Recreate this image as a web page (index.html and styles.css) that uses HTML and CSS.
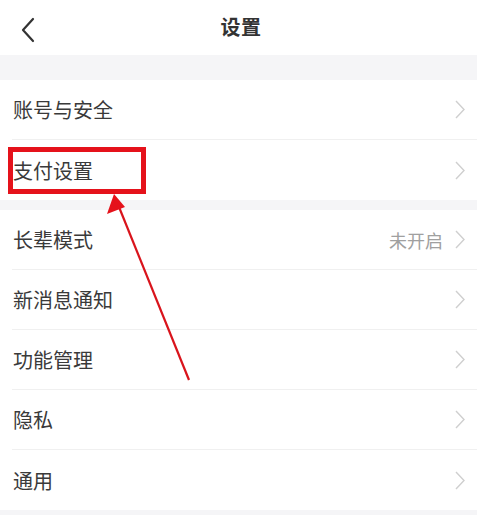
FILE: index.html
```html
<!DOCTYPE html>
<html lang="zh-CN">
<head>
<meta charset="utf-8">
<title>设置</title>
<link rel="stylesheet" href="styles.css">
</head>
<body>
<div class="page">
  <header class="topbar">
    <svg class="back" width="20" height="28" viewBox="0 0 20 28"><path d="M13 3 L3 14 L13 25" fill="none" stroke="#333" stroke-width="2.2" stroke-linecap="round" stroke-linejoin="round"/></svg>
    <h1 class="title">设置</h1>
  </header>
  <div class="gap gap-top"></div>
  <section class="group">
    <div class="row"><span class="label">账号与安全</span><svg class="chev" width="10" height="19" viewBox="0 0 10 19"><path d="M1 1 L9 9.5 L1 18" fill="none" stroke="#cfcfcf" stroke-width="1.4"/></svg></div>
    <div class="row"><span class="label">支付设置</span><svg class="chev" width="10" height="19" viewBox="0 0 10 19"><path d="M1 1 L9 9.5 L1 18" fill="none" stroke="#cfcfcf" stroke-width="1.4"/></svg></div>
  </section>
  <div class="gap gap-mid"></div>
  <section class="group">
    <div class="row"><span class="label">长辈模式</span><span class="value">未开启</span><svg class="chev" width="10" height="19" viewBox="0 0 10 19"><path d="M1 1 L9 9.5 L1 18" fill="none" stroke="#cfcfcf" stroke-width="1.4"/></svg></div>
    <div class="row"><span class="label">新消息通知</span><svg class="chev" width="10" height="19" viewBox="0 0 10 19"><path d="M1 1 L9 9.5 L1 18" fill="none" stroke="#cfcfcf" stroke-width="1.4"/></svg></div>
    <div class="row"><span class="label">功能管理</span><svg class="chev" width="10" height="19" viewBox="0 0 10 19"><path d="M1 1 L9 9.5 L1 18" fill="none" stroke="#cfcfcf" stroke-width="1.4"/></svg></div>
    <div class="row"><span class="label">隐私</span><svg class="chev" width="10" height="19" viewBox="0 0 10 19"><path d="M1 1 L9 9.5 L1 18" fill="none" stroke="#cfcfcf" stroke-width="1.4"/></svg></div>
    <div class="row"><span class="label">通用</span><svg class="chev" width="10" height="19" viewBox="0 0 10 19"><path d="M1 1 L9 9.5 L1 18" fill="none" stroke="#cfcfcf" stroke-width="1.4"/></svg></div>
  </section>
  <div class="gap gap-bottom"></div>

  <div class="highlight"></div>
  <svg class="arrow" width="477" height="515" viewBox="0 0 477 515">
    <line x1="189" y1="380" x2="119" y2="207" stroke="#d9141c" stroke-width="2.2"/>
    <polygon points="114,194 107,214 125,207" fill="#e5121b"/>
  </svg>
</div>
</body>
</html>
```

FILE: styles.css
```css
* { box-sizing: border-box; }
html, body { margin: 0; padding: 0; }
body {
  background: #f5f5f7;
  font-family: "Noto Sans CJK SC", "Noto Sans", sans-serif;
  color: #333;
}
.page {
  position: relative;
  width: 477px;
  height: 515px;
  overflow: hidden;
  background: #f5f5f7;
}
.topbar {
  position: relative;
  height: 55px;
  background: #fff;
  display: flex;
  align-items: center;
  justify-content: center;
}
.back {
  position: absolute;
  left: 20px;
  top: 16px;
}
.title {
  margin: 0 0 2px 5px;
  font-size: 20px;
  font-weight: 700;
  color: #333;
  letter-spacing: 0.5px;
}
.gap-top { height: 25px; }
.gap-mid { height: 10px; }
.group { background: #fff; }
.row {
  height: 60px;
  display: flex;
  align-items: center;
  margin-left: 12px;
  padding-right: 12px;
  border-bottom: 1px solid #f0f0f0;
}
.row:last-child { border-bottom: none; }
.label {
  flex: 1;
  font-size: 20px;
  color: #3a3a3a;
  padding-left: 1px;
}
.value {
  font-size: 18px;
  color: #a0a0a0;
  margin-right: 12px;
}
.chev {
  display: block;
  margin-right: 0;
}
.highlight {
  position: absolute;
  left: 8px;
  top: 147px;
  width: 138px;
  height: 47px;
  border: 5px solid #e5121b;
}
.arrow {
  position: absolute;
  left: 0;
  top: 0;
}
```
